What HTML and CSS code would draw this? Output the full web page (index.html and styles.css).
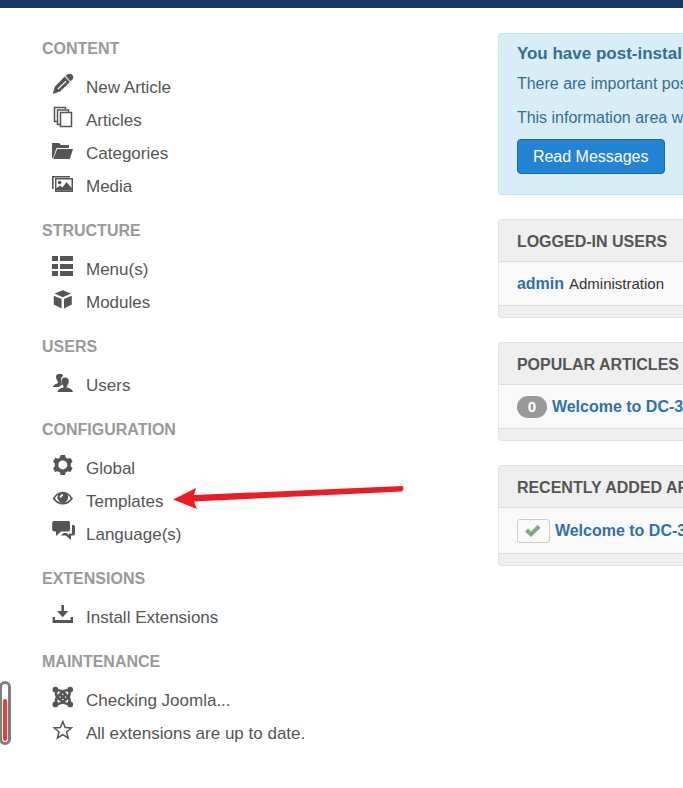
FILE: index.html
```html
<!DOCTYPE html>
<html lang="en">
    <head>
        <title>Control Panel - Administration</title>
        <meta charset="UTF-8">
        <meta name="viewport" content="width=device-width, initial-scale=1.0">
        <link rel="stylesheet" href="styles.css">
    </head>
    <body>
        <div class="topbar"></div>

        <div class="meter"><div class="meter-fill"></div></div>

        <div class="container">
            <nav class="quick-icons">
                <h2>CONTENT</h2>
                <ul>
                    <li><a href="#">
                        <svg class="icon" viewBox="0 0 24 22"><path fill-rule="evenodd" d="M.7 21 2.8 13.8 12.6 3.6 18 9 8 18.6ZM5.6 15.6 6.4 16.4 14.4 8.6 13.6 7.8Z"/><path d="M13.4 2.8 15.8 1.2Q18-.2 20.4 2 22.2 4.6 20.4 6.4L18.6 8.2Z"/></svg>
                        <span>New Article</span></a></li>
                    <li><a href="#">
                        <svg class="icon line" viewBox="0 0 24 22"><path d="M5 15.5H2.5V1.5H13.5V3M8 18.5H5.5V4H16.5V6"/><path d="M8.5 6.5H19.5V20.5H8.5Z"/></svg>
                        <span>Articles</span></a></li>
                    <li><a href="#">
                        <svg class="icon" viewBox="0 0 24 22"><path d="M0 4H7L9 6H17V9H4.5L1 19H0Z"/><path d="M5.2 10H21L17.8 20H1.2Z"/></svg>
                        <span>Categories</span></a></li>
                    <li><a href="#">
                        <svg class="icon" viewBox="0 0 24 22"><path d="M0 4H18V5.4H1.6V17H0Z"/><path fill-rule="evenodd" d="M3 6H21V20H3ZM4.5 7.5V18.5H19.5V7.5Z"/><circle cx="7.6" cy="10.6" r="1.8"/><path d="M4 18.5V16.5L8 13.5 10.5 15.5 14.5 10 20 16.5V18.5Z"/></svg>
                        <span>Media</span></a></li>
                </ul>

                <h2>STRUCTURE</h2>
                <ul>
                    <li><a href="#">
                        <svg class="icon" viewBox="0 0 24 22"><path d="M0 1H6V6H0ZM8 1H21V6H8ZM0 9H6V14H0ZM8 9H21V14H8ZM0 16H6V21H0ZM8 16H21V21H8Z"/></svg>
                        <span>Menu(s)</span></a></li>
                    <li><a href="#">
                        <svg class="icon" viewBox="0 0 24 22"><path d="M10.8 2.2 19 5.6 10.8 9.2 2.6 5.6ZM1.8 7.8 9.6 11V20.4L1.8 16.6ZM19.8 7.8 12 11V20.4L19.8 16.6Z"/></svg>
                        <span>Modules</span></a></li>
                </ul>

                <h2>USERS</h2>
                <ul>
                    <li><a href="#">
                        <svg class="icon" viewBox="0 0 24 22"><path d="M4 6Q4 2.8 7.8 2.8 10.6 2.8 11.4 5 8.4 6.4 9 10 9.4 12 10.2 13.4L6.8 16H.8Q1.2 13.6 5.8 12.2V10.4Q4 8.8 4 6Z"/><path d="M9.4 10.6Q9.4 6.6 13 6.6 16.8 6.6 16.8 10.6 16.8 13.4 14.8 15V16.6Q20.6 17.8 21 21H5.4Q6 17.8 11.4 16.6V15Q9.4 13.4 9.4 10.6Z"/></svg>
                        <span>Users</span></a></li>
                </ul>

                <h2>CONFIGURATION</h2>
                <ul>
                    <li><a href="#">
                        <svg class="icon" viewBox="0 0 24 22"><path fill-rule="evenodd" d="M8.6 1H13L13.6 3.6 15.8 4.8 18.2 3.8 20.6 7.6 18.8 9.4V12.4L20.6 14.2 18.4 18 15.8 17.2 13.6 18.4 13 21H8.6L8 18.4 5.8 17.2 3.2 18 1 14.2 2.8 12.4V9.4L1 7.6 3.4 3.8 5.8 4.8 8 3.6ZM10.8 6.4A4.5 4.5 0 1 0 10.8 15.4 4.5 4.5 0 1 0 10.8 6.4Z"/></svg>
                        <span>Global</span></a></li>
                    <li><a href="#">
                        <svg class="icon" viewBox="0 0 24 22"><path fill-rule="evenodd" d="M.6 11.4Q5 4.8 10.8 4.8 16.6 4.8 21 11.4 16.6 17.6 10.8 17.6 5 17.6.6 11.4ZM2.8 11.4Q6.4 15.8 10.8 15.8 15.2 15.8 18.8 11.4 17.6 9 15.6 7.8A5.4 5.4 0 1 1 6 7.8Q4 9 2.8 11.4Z"/><path fill="#fff" d="M7.6 10.4Q7.8 7.6 11 7V8.8Q9.4 9.2 9.4 10.8Z"/></svg>
                        <span>Templates</span></a>
                        <svg class="arrow" viewBox="0 0 232 26"><path d="M0 14.6 23 3 21 10 229 1Q232 3 229 6.4L21 16.4 24 24Z"/></svg></li>
                    <li><a href="#">
                        <svg class="icon" viewBox="0 0 24 22"><path d="M2 1H16.4Q18 1 18 2.6V9.6Q18 11.4 16.4 11.4H9L4 16V11.4H2Q.2 11.4.2 9.6V2.6Q.2 1 2 1Z"/><path d="M20 5H21.4Q23 5 23 6.6V13.8Q23 15.4 21.4 15.4H19V20L13.6 15.4H9L11.6 13H14.6L17 15V13.4H20Z"/></svg>
                        <span>Language(s)</span></a></li>
                </ul>

                <h2>EXTENSIONS</h2>
                <ul>
                    <li><a href="#">
                        <svg class="icon" viewBox="0 0 24 22"><path d="M9.4 2H12V8H16.4L10.7 14.2 5 8H9.4ZM.6 14H3V17H18.6V14H21V20H.6Z"/></svg>
                        <span>Install Extensions</span></a></li>
                </ul>

                <h2>MAINTENANCE</h2>
                <ul>
                    <li><a href="#">
                        <svg class="icon joomla" viewBox="0 0 24 22"><circle cx="3.4" cy="3.6" r="2.9"/><circle cx="18.2" cy="3.6" r="2.9"/><circle cx="3.4" cy="18.4" r="2.9"/><circle cx="18.2" cy="18.4" r="2.9"/><path d="M4.4 17.4Q3.2 13.4 5.4 11L9.8 6.6Q13 3.4 17.2 4.6Q18.4 8.6 16.2 11L11.8 15.4Q8.6 18.6 4.4 17.4M4.4 4.6Q8.6 3.4 11.8 6.6L16.2 11Q18.4 13.4 17.2 17.4Q13 18.6 9.8 15.4L5.4 11Q3.2 8.6 4.4 4.6M8.6 8.8 13 13.2M13 8.8 8.6 13.2"/></svg>
                        <span>Checking Joomla...</span></a></li>
                    <li><a href="#">
                        <svg class="icon line" viewBox="0 0 24 22"><path d="M10.8 2.6 13.2 8.6 19.4 9 14.6 13 16.2 19 10.8 15.6 5.4 19 7 13 2.2 9 8.4 8.6Z"/></svg>
                        <span>All extensions are up to date.</span></a></li>
                </ul>
            </nav>

            <main class="modules">
                <section class="alert">
                    <h3>You have post-installation messages</h3>
                    <p>There are important post-installation messages that require your attention.</p>
                    <p>This information area won't appear when you have hidden all the messages.</p>
                    <button type="button" class="btn">Read Messages</button>
                </section>

                <section class="well">
                    <h3>LOGGED-IN USERS</h3>
                    <div class="row"><a href="#">admin</a> <small>Administration</small></div>
                </section>

                <section class="well">
                    <h3>POPULAR ARTICLES</h3>
                    <div class="row"><span class="badge">0</span> <a href="#">Welcome to DC-3</a></div>
                </section>

                <section class="well">
                    <h3>RECENTLY ADDED ARTICLES</h3>
                    <div class="row">
                        <button type="button" class="state" aria-label="Published"><svg viewBox="0 0 16 12"><path d="M0 6.4 3 3.6 6 6.4 12.6 0 15.6 2.8 6 12Z"/></svg></button>
                        <a href="#">Welcome to DC-3</a>
                    </div>
                </section>
            </main>
        </div>
    </body>
</html>
```
FILE: styles.css
```css
* {
    box-sizing: border-box;
}

body {
    margin: 0;
    background: #fff;
    color: #333;
    font-family: "Liberation Sans", Arial, sans-serif;
    font-size: 16px;
    line-height: 20px;
}

h2, h3, p, ul {
    margin: 0;
    padding: 0;
}

h2, h3 {
    font-size: 16px;
}

a {
    text-decoration: none;
}

.topbar {
    height: 8px;
    background: #1a3867;
}

.container {
    display: grid;
    grid-template-columns: minmax(0, 7fr) minmax(0, 3fr);
    column-gap: 24px;
    padding-left: 42px;
}

/* quick icons */
.quick-icons {
    padding-top: 31px;
}

.quick-icons h2 {
    margin-bottom: 12px;
    color: #999;
}

.quick-icons ul {
    margin-bottom: 18px;
    list-style: none;
}

.quick-icons li {
    position: relative;
}

.quick-icons a {
    display: flex;
    align-items: center;
    height: 33px;
    padding-left: 10px;
    color: #555;
    font-size: 17px;
}

.icon {
    flex: none;
    width: 24px;
    height: 22px;
    margin: 0 10px 8px 0;
    fill: #555;
}

.icon.line {
    fill: none;
    stroke: #555;
    stroke-width: 1.5;
}

.joomla path {
    fill: none;
    stroke: #555;
    stroke-width: 2.6;
}

.arrow {
    position: absolute;
    top: 0;
    left: 131px;
    width: 232px;
    height: 26px;
    fill: #ed1c24;
}

/* right column */
.modules {
    padding-top: 25px;
}

.alert {
    margin-bottom: 24px;
    padding: 10px 0 20px 18px;
    overflow: hidden;
    border: 1px solid #bce8f1;
    border-right: 0;
    border-radius: 4px 0 0 4px;
    background: #d9edf7;
    color: #31708f;
    white-space: nowrap;
}

.alert h3 {
    margin-bottom: 10px;
    font-size: 17px;
}

.alert p + p {
    margin-top: 14px;
}

.btn {
    display: block;
    height: 35px;
    margin-top: 11px;
    padding: 0 15px;
    border: 1px solid #1a66a5;
    border-radius: 4px;
    background: #2384d3;
    color: #fff;
    font: inherit;
}

.well {
    margin-bottom: 24px;
    padding-bottom: 11px;
    overflow: hidden;
    border: 1px solid #e3e3e3;
    border-right: 0;
    border-radius: 4px 0 0 4px;
    background: #efefef;
    white-space: nowrap;
}

.well h3 {
    padding: 12px 0 9px 18px;
    color: #555;
}

.row {
    display: flex;
    align-items: center;
    gap: 5px;
    padding: 11px 0 10px 18px;
    border: solid #ddd;
    border-width: 1px 0;
    background: #f9f9f9;
}

.row a {
    color: #3071a9;
    font-weight: bold;
    line-height: 22px;
}

.row small {
    font-size: 15px;
}

.badge {
    flex: none;
    width: 30px;
    border-radius: 11px;
    background: #999;
    color: #fff;
    font-size: 15px;
    font-weight: bold;
    line-height: 22px;
    text-align: center;
}

.state {
    display: flex;
    flex: none;
    align-items: center;
    justify-content: center;
    width: 33px;
    height: 24px;
    padding: 0;
    border: 1px solid #ccc;
    border-radius: 3px;
    background: #fafafa;
}

.state svg {
    width: 16px;
    height: 12px;
    fill: #7aae7a;
}

/* level meter on the window edge */
.meter {
    position: fixed;
    bottom: 43px;
    left: -1px;
    display: flex;
    align-items: flex-end;
    width: 12px;
    height: 64px;
    padding: 1px;
    border: 3px solid #808080;
    border-radius: 6px;
}

.meter-fill {
    width: 4px;
    height: 42px;
    border-radius: 2px;
    background: #ee3b3b;
}
```
